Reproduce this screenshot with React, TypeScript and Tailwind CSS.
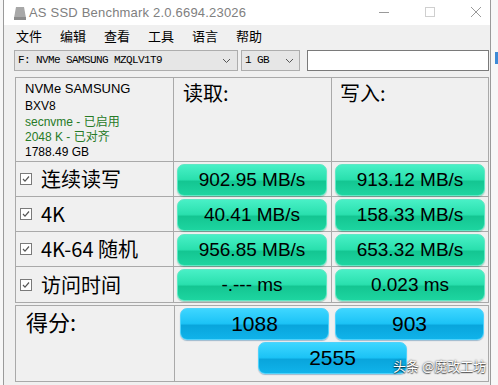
import React from "react";

const CJK = "font-['Noto_Sans_CJK_SC',sans-serif]";

const ROWS = [
  { label: "连续读写", read: "902.95 MB/s", write: "913.12 MB/s" },
  { label: "4K", read: "40.41 MB/s", write: "158.33 MB/s" },
  { label: "4K-64 随机", read: "956.85 MB/s", write: "653.32 MB/s" },
  { label: "访问时间", read: "-.--- ms", write: "0.023 ms" },
];

const Chevron = () => (
  <svg width="9" height="6" viewBox="0 0 9 6" className="shrink-0">
    <path d="M1 1l3.5 3.5L8 1" fill="none" stroke="#555" strokeWidth="1" />
  </svg>
);

const Check = () => (
  <div className="w-[12px] h-[12px] border border-[#7a7a7a] bg-white flex items-center justify-center shrink-0">
    <svg width="10" height="10" viewBox="0 0 10 10">
      <path d="M2 5l2 2.2L8 2.5" fill="none" stroke="#555" strokeWidth="1.2" />
    </svg>
  </div>
);

const GreenBox = ({ text }: { text: string }) => (
  <div className="h-[32px] rounded-[7px] border border-[#5fe8c4] bg-[linear-gradient(to_bottom,#48f0c6_0%,#2ae0ae_48%,#14c692_55%,#1dd5a0_100%)] shadow-[0_1px_1px_rgba(0,120,80,0.35)] flex items-center justify-center text-[19px] text-black">
    {text}
  </div>
);

const BlueBox = ({ text }: { text: string }) => (
  <div className="w-[149px] h-[32px] rounded-[7px] border border-[#4fd2fb] bg-[linear-gradient(to_bottom,#3ed6ff_0%,#1cc3f6_48%,#09a5dc_55%,#10b3ea_100%)] shadow-[0_1px_1px_rgba(0,80,140,0.35)] flex items-center justify-center text-[21px] text-black">
    {text}
  </div>
);

export default function App() {
  return (
    <div className="w-[498px] h-[385px] bg-white flex overflow-hidden font-['Liberation_Sans',sans-serif] relative">
      <div className="w-[3px] bg-[#f7f7f7]" />
      <div className="w-[488px] border-l border-r border-[#9a9a9a] flex flex-col">
        {/* title bar */}
        <div className="h-[25px] bg-white flex items-center shrink-0">
          <svg width="12" height="14" viewBox="0 0 12 14" className="ml-[10px]">
            <path d="M2 1h8l2 11H0z" fill="#a8a8a8" />
            <rect x="0" y="11" width="12" height="3" fill="#8c8c8c" />
          </svg>
          <span className="ml-[3px] text-[13px] text-[#808080] tracking-[0.2px]">
            AS SSD Benchmark 2.0.6694.23026
          </span>
          <div className="ml-auto flex items-center">
            <svg width="46" height="25" viewBox="0 0 46 25">
              <path d="M27 12.5h10" stroke="#9a9a9a" strokeWidth="1" />
            </svg>
            <svg width="46" height="25" viewBox="0 0 46 25">
              <rect x="27.5" y="7.5" width="9" height="9" fill="none" stroke="#cfcfcf" strokeWidth="1" />
            </svg>
            <svg width="46" height="25" viewBox="0 0 46 25">
              <path d="M27 7l10 10M37 7L27 17" stroke="#9a9a9a" strokeWidth="1" />
            </svg>
          </div>
        </div>

        <div className="flex-1 bg-[#f0f0f0] flex flex-col">
          {/* menu */}
          <div className={`h-[21px] flex items-center gap-[18px] pl-[12px] text-[13px] text-black ${CJK}`}>
            <span>文件</span>
            <span>编辑</span>
            <span>查看</span>
            <span>工具</span>
            <span>语言</span>
            <span>帮助</span>
          </div>

          {/* selects */}
          <div className="mt-[4px] h-[21px] flex pl-[10px]">
            <div className="w-[224px] h-full border border-[#adadad] bg-[#e6e6e6] flex items-center pl-[3px] pr-[6px]">
              <span className="font-['Liberation_Mono',monospace] text-[11px] tracking-[-0.6px] text-black">
                F: NVMe SAMSUNG MZQLV1T9
              </span>
              <span className="ml-auto">
                <Chevron />
              </span>
            </div>
            <div className="ml-[3px] w-[59px] h-full border border-[#adadad] bg-[#e6e6e6] flex items-center pl-[3px] pr-[5px]">
              <span className="font-['Liberation_Mono',monospace] text-[11px] tracking-[-0.6px] text-black">1 GB</span>
              <span className="ml-auto">
                <Chevron />
              </span>
            </div>
            <div className="ml-[7px] w-[182px] h-full border border-[#7a7a7a] bg-white" />
          </div>

          {/* results grid */}
          <div className="mt-[6px] ml-[11px] w-[474px] border border-[#a9a9a9] flex flex-col">
            <div className="h-[84px] flex border-b border-[#a9a9a9]">
              <div className="w-[158px] border-r border-[#a9a9a9] pl-[9px] pt-[3px] flex flex-col leading-[15px]">
                <span className="text-[13px] text-black">NVMe SAMSUNG</span>
                <span className="text-[12px] text-black mt-[3px]">BXV8</span>
                <span className="text-[12px] text-[#277a27] mt-[1px] font-['Liberation_Sans','Noto_Sans_CJK_SC',sans-serif]">
                  secnvme - 已启用
                </span>
                <span className="text-[12px] text-[#277a27] font-['Liberation_Sans','Noto_Sans_CJK_SC',sans-serif]">
                  2048 K - 已对齐
                </span>
                <span className="text-[12px] text-black">1788.49 GB</span>
              </div>
              <div className={`w-[158px] border-r border-[#a9a9a9] pl-[9px] pt-[1px] text-[20px] leading-[28px] text-black ${CJK}`}>
                读取:
              </div>
              <div className={`flex-1 pl-[8px] pt-[1px] text-[20px] leading-[28px] text-black ${CJK}`}>
                写入:
              </div>
            </div>

            {ROWS.map((row, i) => (
              <div
                key={row.label}
                className={`h-[35px] flex ${i !== ROWS.length - 1 ? "border-b border-[#a9a9a9]" : ""}`}
              >
                <div className={`w-[158px] border-r border-[#a9a9a9] flex items-center pl-[4px] gap-[9px] text-[20px] text-black ${CJK}`}>
                  <Check />
                  <span className="leading-none">{row.label}</span>
                </div>
                <div className="w-[158px] border-r border-[#a9a9a9] pl-[3px] pr-[4px] pt-[2px]">
                  <GreenBox text={row.read} />
                </div>
                <div className="flex-1 pl-[3px] pr-[3px] pt-[2px]">
                  <GreenBox text={row.write} />
                </div>
              </div>
            ))}
          </div>

          {/* score */}
          <div className="mt-[2px] ml-[11px] w-[474px] h-[77px] border border-[#a9a9a9] flex">
            <div className={`w-[159px] border-r border-[#a9a9a9] pl-[10px] text-[22px] leading-[30px] text-black ${CJK}`}>
              得分:
            </div>
            <div className="flex-1 flex flex-col pt-[2px]">
              <div className="flex gap-[6px] pl-[5px]">
                <BlueBox text="1088" />
                <BlueBox text="903" />
              </div>
              <div className="flex pl-[83px] mt-[2px]">
                <BlueBox text="2555" />
              </div>
            </div>
          </div>
        </div>
      </div>
      <div className="flex-1 bg-[#f7f7f7] relative">
        <div className="absolute right-0 top-[52px] w-[3px] h-[12px] bg-[#3d8ad6]" />
      </div>

      <div className={`absolute left-[393px] top-[356px] text-[13px] text-white [text-shadow:0_0_2px_rgba(0,0,0,0.8),0_1px_1px_rgba(0,0,0,0.6)] ${CJK}`}>
        头条 @魔改工坊
      </div>
    </div>
  );
}
